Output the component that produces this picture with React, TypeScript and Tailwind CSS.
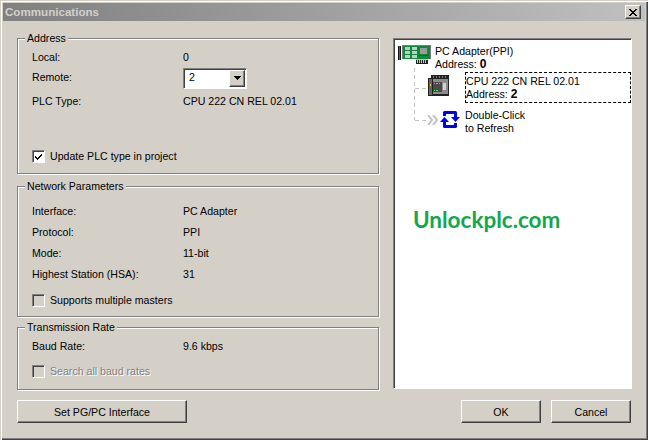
import type { ReactNode } from "react";

const etched = "border border-[#808080] shadow-[1px_1px_0_#fff,inset_1px_1px_0_#fff]";
const raised = "border border-[#fff] border-r-[#404040] border-b-[#404040] shadow-[inset_-1px_-1px_0_#808080]";

function Group({ title, height, children }: { title: string; height: string; children: ReactNode }) {
  return (
    <div className={`relative ${etched} ${height} pl-[14px]`}>
      <span className="absolute left-[7px] top-[-8px] bg-[#d4d0c8] px-[2px] leading-[14px]">{title}</span>
      {children}
    </div>
  );
}

function Row({ label, value, height = "h-[21px]" }: { label: string; value: ReactNode; height?: string }) {
  return (
    <div className={`flex items-center ${height}`}>
      <span className="w-[151px]">{label}</span>
      <span>{value}</span>
    </div>
  );
}

function CheckBox({ checked, disabled, label }: { checked?: boolean; disabled?: boolean; label: string }) {
  return (
    <div className="flex items-center">
      <span className={`flex h-[13px] w-[13px] items-center justify-center border border-[#808080] border-r-white border-b-white shadow-[inset_1px_1px_0_#404040] ${checked ? "bg-white" : "bg-[#d4d0c8]"}`}>
        {checked && (
          <svg width="9" height="9" viewBox="0 0 9 9" shapeRendering="crispEdges">
            <path d="M1 4v2h1v1h1v1h1V7h1V6h1V5h1V4h1V2H7v1H6v1H5v1H4v1H3V5H2V4z" fill="#000" />
          </svg>
        )}
      </span>
      <span className={`ml-[5px] ${disabled ? "text-[#808080] [text-shadow:1px_1px_0_#fff]" : ""}`}>{label}</span>
    </div>
  );
}

function DialogButton({ label, width }: { label: string; width: string }) {
  return <button className={`${raised} ${width} h-[23px] bg-[#d4d0c8] text-center leading-[20px]`}>{label}</button>;
}

function PcAdapterIcon() {
  return (
    <svg width="33" height="20" viewBox="0 0 33 20" shapeRendering="crispEdges" className="shrink-0">
      <rect x="0" y="1" width="1" height="14" fill="#111" />
      <rect x="1" y="1" width="1" height="14" fill="#0a8a3a" />
      <rect x="2" y="1" width="1" height="14" fill="#111" />
      <rect x="4" y="0" width="29" height="14" fill="#7a7a7a" />
      <rect x="5" y="1" width="27" height="13" fill="#0c8a3a" />
      <rect x="7" y="2" width="5" height="3" fill="#c8c8c8" />
      <rect x="14" y="2" width="5" height="3" fill="#c8c8c8" />
      <rect x="7" y="6" width="5" height="3" fill="#c8c8c8" />
      <rect x="14" y="6" width="5" height="3" fill="#c8c8c8" />
      <rect x="7" y="10" width="5" height="3" fill="#c8c8c8" />
      <rect x="14" y="10" width="5" height="3" fill="#c8c8c8" />
      <rect x="22" y="3" width="7" height="6" fill="#9a9a9a" />
      <rect x="21" y="10" width="10" height="1" fill="#063" />
      <rect x="23" y="12" width="5" height="1" fill="#c03030" />
      <rect x="18" y="14" width="12" height="5" fill="#222" />
      <path d="M19 15h1v3h-1zM21 15h1v3h-1zM23 15h1v3h-1zM25 15h1v3h-1zM27 15h1v3h-1z" fill="#f0d020" />
      <rect x="18" y="14" width="12" height="1" fill="#f0d020" />
    </svg>
  );
}

function CpuIcon() {
  return (
    <svg width="21" height="21" viewBox="0 0 21 21" shapeRendering="crispEdges" className="shrink-0">
      <rect x="3" y="0" width="18" height="3" fill="#222" />
      <path d="M5 1h1v2H5zM8 1h1v2H8zM11 1h1v2h-1zM14 1h1v2h-1zM17 1h1v2h-1z" fill="#777" />
      <rect x="0" y="3" width="21" height="18" fill="#222" />
      <rect x="1" y="4" width="3" height="16" fill="#666" />
      <rect x="5" y="4" width="15" height="15" fill="#8c8c8c" />
      <rect x="5" y="7" width="9" height="10" fill="#4a4a4a" />
      <path d="M6 8h1v1H6zM8 8h2v1H8zM11 8h1v1h-1zM6 15h1v1H6zM8 15h2v1H8z" fill="#40e060" />
      <rect x="15" y="8" width="3" height="7" fill="#d0d0d0" />
      <rect x="2" y="9" width="1" height="2" fill="#f0d020" />
    </svg>
  );
}

function RefreshIcon() {
  return (
    <svg width="20" height="19" viewBox="0 0 20 19" className="shrink-0">
      <path d="M4.5 6V2.5H15.5V7" fill="none" stroke="#0000f0" strokeWidth="3" strokeLinejoin="round" />
      <path d="M11 7h9l-4.5 5z" fill="#0000f0" />
      <path d="M15.5 13V16.5H4.5V12" fill="none" stroke="#0000f0" strokeWidth="3" strokeLinejoin="round" />
      <path d="M0 12h9L4.5 7z" fill="#0000f0" />
    </svg>
  );
}

export default function App() {
  return (
    <div
      className="flex h-[440px] w-[648px] flex-col overflow-hidden bg-[#d4d0c8] p-[3px] text-[10.6px] text-black shadow-[inset_1px_1px_0_#d4d0c8,inset_2px_2px_0_#fff,inset_-1px_-1px_0_#404040,inset_-2px_-2px_0_#808080]"
      style={{ fontFamily: '"Liberation Sans", Arial, sans-serif' }}
    >
      {/* Title bar */}
      <div className="flex h-[18px] shrink-0 items-center justify-between bg-gradient-to-r from-[#808080] to-[#c0c0c0] pr-[4px] pl-[2px]">
        <span className="text-[11.6px] font-bold text-[#d4d0c8]">Communications</span>
        <button className={`flex h-[14px] w-[16px] items-center justify-center bg-[#d4d0c8] ${raised}`}>
          <svg width="8" height="7" viewBox="0 0 8 7" shapeRendering="crispEdges">
            <path d="M0 0h2v1h1v1h2V1h1V0h2v1H7v1H6v1H5v1h1v1h1v1h1v1H6V6H5V5H3v1H2v1H0V6h1V5h1V4h1V3H2V2H1V1H0z" fill="#000" />
          </svg>
        </button>
      </div>

      <div className="flex flex-1 flex-col pt-[17px] pr-[13px] pl-[14px]">
        <div className="flex h-[352px] gap-[14px]">
          {/* Left column */}
          <div className="flex w-[362px] flex-col">
            <Group title="Address" height="h-[136px]">
              <div className="pt-[9px]">
                <Row label="Local:" value="0" height="h-[20px]" />
                <Row
                  label="Remote:"
                  height="h-[20px]"
                  value={
                    <span className="flex h-[21px] w-[64px] items-center justify-between border border-[#808080] border-r-white border-b-white bg-white pr-[1px] pl-[5px] shadow-[inset_1px_1px_0_#404040]">
                      2
                      <span className={`flex h-[17px] w-[16px] items-center justify-center bg-[#d4d0c8] ${raised}`}>
                        <svg width="7" height="4" viewBox="0 0 7 4" shapeRendering="crispEdges">
                          <path d="M0 0h7v1H6v1H5v1H4v1H3V3H2V2H1V1H0z" fill="#000" />
                        </svg>
                      </span>
                    </span>
                  }
                />
                <Row label="PLC Type:" value="CPU 222 CN REL 02.01" height="h-[28px]" />
                <div className="pt-[33px]">
                  <CheckBox checked label="Update PLC type in project" />
                </div>
              </div>
            </Group>

            <div className="mt-[12px]">
              <Group title="Network Parameters" height="h-[131px]">
                <div className="pt-[14px]">
                  <Row label="Interface:" value="PC Adapter" />
                  <Row label="Protocol:" value="PPI" />
                  <Row label="Mode:" value="11-bit" />
                  <Row label="Highest Station (HSA):" value="31" />
                  <div className="pt-[8px]">
                    <CheckBox label="Supports multiple masters" />
                  </div>
                </div>
              </Group>
            </div>

            <div className="mt-[10px]">
              <Group title="Transmission Rate" height="h-[63px]">
                <div className="pt-[8px]">
                  <Row label="Baud Rate:" value="9.6 kbps" />
                  <div className="pt-[7px]">
                    <CheckBox disabled label="Search all baud rates" />
                  </div>
                </div>
              </Group>
            </div>
          </div>

          {/* Tree panel */}
          <div className="relative h-[351px] w-[239px] border border-[#808080] border-r-white border-b-white bg-white shadow-[inset_1px_1px_0_#404040]">
            <svg width="60" height="90" className="absolute top-[29px] left-[18px]" shapeRendering="crispEdges">
              <path d="M2.5 0V52M2.5 20H16M2.5 52H16" fill="none" stroke="#c4c4c4" strokeDasharray="4 3" />
            </svg>
            <svg width="12" height="10" viewBox="0 0 12 10" className="absolute top-[76px] left-[33px]">
              <path d="M1 0l4 5-4 5M6 0l4 5-4 5" fill="none" stroke="#c0c0c0" strokeWidth="2" />
            </svg>
            <div className="flex items-start pt-[6px] pl-[4px] leading-[13px]">
              <PcAdapterIcon />
              <div className="pl-[4px]">
                <div>PC Adapter(PPI)</div>
                <div>
                  Address: <b className="text-[12px]">0</b>
                </div>
              </div>
            </div>
            <div className="mt-[1px] flex items-start pl-[34px] leading-[13px]">
              <div className="pt-[3px]">
                <CpuIcon />
              </div>
              <div className="ml-[16px] h-[31px] flex-1 border border-dashed border-black pt-[2px]">
                <div>CPU 222 CN REL 02.01</div>
                <div>
                  Address: <b className="text-[12px]">2</b>
                </div>
              </div>
            </div>
            <div className="flex items-start pt-[6px] pl-[46px] leading-[13px]">
              <div className="pt-[1px]">
                <RefreshIcon />
              </div>
              <div className="pl-[5px]">
                <div>Double-Click</div>
                <div>to Refresh</div>
              </div>
            </div>
            <div className="pt-[71px] pl-[19px] text-[22.5px] leading-[28px] font-bold text-[#10a84c]" style={{ fontFamily: "Lato, sans-serif" }}>
              Unlockplc.com
            </div>
          </div>
        </div>

        {/* Bottom buttons */}
        <div className="flex items-start justify-between pt-[10px] pr-[1px]">
          <DialogButton label="Set PG/PC Interface" width="w-[170px]" />
          <div className="flex gap-[10px]">
            <DialogButton label="OK" width="w-[80px]" />
            <DialogButton label="Cancel" width="w-[80px]" />
          </div>
        </div>
      </div>
    </div>
  );
}
